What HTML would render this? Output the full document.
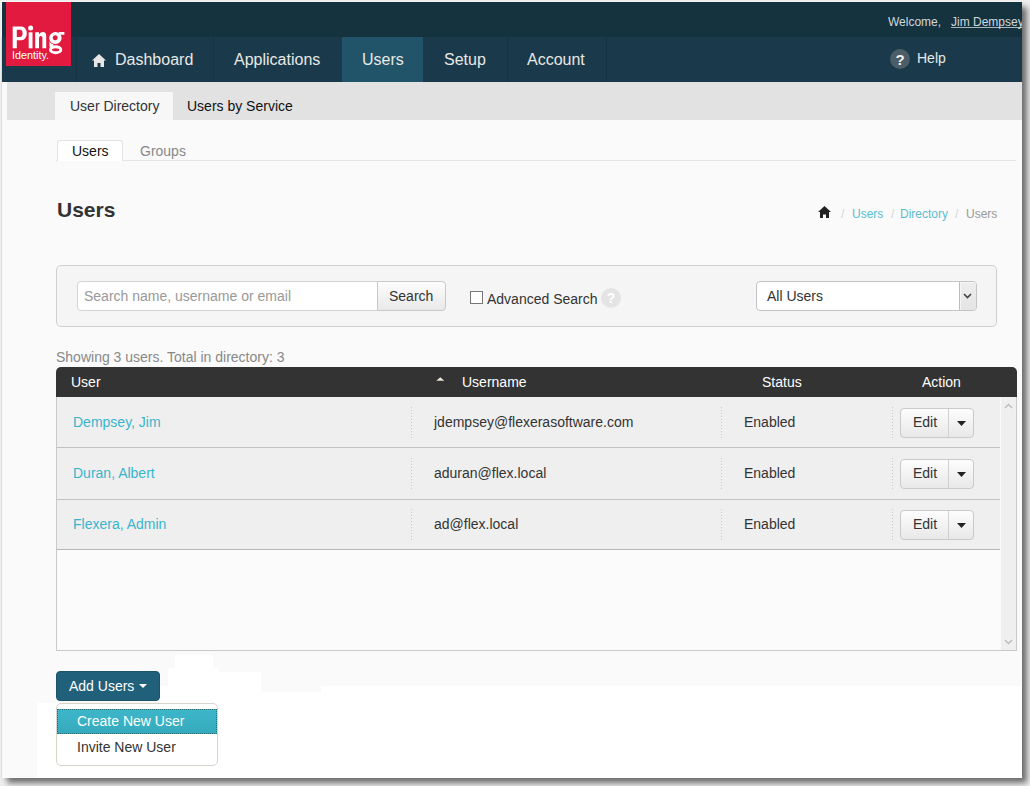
<!DOCTYPE html>
<html><head><meta charset="utf-8">
<style>
*{box-sizing:border-box;margin:0;padding:0}
html,body{width:1030px;height:786px;overflow:hidden;background:#efefef;font-family:"Liberation Sans",sans-serif;font-size:14px;color:#333}
.abs{position:absolute}
#frame{position:absolute;left:2px;top:2px;width:1020px;height:776px;background:#fafafa;box-shadow:5px 5px 6px rgba(0,0,0,.55),-1px -1px 0 #f8f8f8;overflow:hidden}
#topbar{left:0;top:0;width:1020px;height:35px;background:#15323f}
#nav{left:0;top:35px;width:1020px;height:45px;background:#1a3a4b}
#logo{left:4px;top:0;width:65px;height:64px;background:#e31a40}
.navitem{position:absolute;top:0;height:45px;color:#e8e8e6;font-size:16px;line-height:45px}
.sep{position:absolute;top:0;width:1px;height:45px;background:#163342}
#subnav{left:5px;top:80px;width:1015px;height:38px;background:#e2e2e2}
.t{position:absolute;white-space:nowrap;line-height:1}
</style></head><body>
<div style="position:absolute;z-index:5;left:1px;top:37px;width:1px;height:741px;background:#dedede"></div>
<div id="frame">
  <div id="topbar" class="abs">
    <div class="t" style="left:886px;top:14px;font-size:12px;color:#d0d8dc">Welcome,</div>
    <div class="t" style="left:949px;top:14px;font-size:12px;color:#d0d8dc;text-decoration:underline;text-decoration-skip-ink:none;text-decoration-color:#aab6bc">Jim Dempsey</div>
  </div>
  <div id="nav" class="abs">
    <div class="sep" style="left:74px"></div>
    <div class="sep" style="left:211px"></div>
    <div class="navitem" style="left:340px;width:81px;background:#225469"></div>
    <div class="sep" style="left:505px"></div>
    <div class="sep" style="left:604px"></div>
    <svg class="abs" style="left:90px;top:17px" width="14" height="13" viewBox="0 0 14 13"><path d="M7 0 L14 6.5 L12 6.5 L12 13 L8.5 13 L8.5 9 L5.5 9 L5.5 13 L2 13 L2 6.5 L0 6.5 Z" fill="#e6e6e6"/></svg>
    <div class="t" style="left:113px;top:15px;font-size:16px;color:#e8e8e6">Dashboard</div>
    <div class="t" style="left:232px;top:15px;font-size:16px;color:#e8e8e6">Applications</div>
    <div class="t" style="left:360px;top:15px;font-size:16px;color:#e8e8e6">Users</div>
    <div class="t" style="left:442px;top:15px;font-size:16px;color:#e8e8e6">Setup</div>
    <div class="t" style="left:525px;top:15px;font-size:16px;color:#e8e8e6">Account</div>
    <div class="abs" style="left:888px;top:12px;width:20px;height:20px;border-radius:50%;background:#4b5d67;color:#f2f2f2;font-size:15px;font-weight:bold;text-align:center;line-height:21px">?</div>
    <div class="t" style="left:915px;top:14px;font-size:14px;color:#e8e8e6">Help</div>
  </div>
  <div id="logo" class="abs"></div>
  <svg class="abs" style="left:-2px;top:-2px" width="80" height="70" viewBox="0 0 80 70">
    <g fill="#fff">
      <path fill-rule="evenodd" d="M12.7,26.6 H21.5 A5.3,6.85 0 0 1 21.5,40.3 H16.8 V48.3 H12.7 Z M16.8,29.7 H20 A2.6,3.6 0 0 1 20,36.9 H16.8 Z"/>
      <rect x="28.7" y="32.3" width="3.8" height="16"/>
      <circle cx="30.6" cy="27.9" r="2.5"/>
      <path d="M35.2,32.3 H39 V34.2 Q40.6,32.1 43,32.1 Q46.2,32.1 46.2,36.2 V48.3 H42.4 V37.6 Q42.4,35.9 40.8,35.9 Q39,35.9 39,38.2 V48.3 H35.2 Z"/>
      <path fill-rule="evenodd" d="M55.4,32.1 A6.2,6 0 1 1 55.39,32.1 Z M55.2,35.2 A2.5,2.5 0 1 0 55.21,35.2 Z"/>
      <path d="M58.5,32.1 H64.4 V34.8 H59.5 Z"/>
      <path d="M49.4,41 Q50.5,44 53.5,44.2 L53.2,46.2 L49.6,47.6 Z"/>
      <ellipse cx="55.65" cy="49.7" rx="5.1" ry="3" fill="none" stroke="#fff" stroke-width="3"/>
    </g>
    <text x="12" y="58.6" font-family="Liberation Sans" font-size="11.5" fill="#fff" textLength="37" lengthAdjust="spacingAndGlyphs">Identity.</text>
  </svg>
  <div id="subnav" class="abs">
    <div class="abs" style="left:48px;top:10px;width:118px;height:28px;background:#f7f7f7"></div>
    <div class="t" style="left:63px;top:17px;color:#333">User Directory</div>
    <div class="t" style="left:180px;top:17px;color:#111">Users by Service</div>
  </div>
  <!-- tabs -->
  <div class="abs" style="left:54px;top:158px;width:960px;height:1px;background:#e4e4e4"></div>
  <div class="abs" style="left:55px;top:138px;width:66px;height:21px;background:#fff;border:1px solid #e3e3e3;border-bottom:none;border-radius:3px 3px 0 0"></div>
  <div class="t" style="left:70px;top:142px;color:#111">Users</div>
  <div class="t" style="left:138px;top:142px;color:#888">Groups</div>
  <!-- title -->
  <div class="t" style="left:55px;top:197px;font-size:21px;font-weight:bold;color:#333">Users</div>
  <svg class="abs" style="left:816px;top:204px" width="13" height="12" viewBox="0 0 13 12"><path d="M6.5 0 L13 6 L11 6 L11 12 L8 12 L8 8.5 L5 8.5 L5 12 L2 12 L2 6 L0 6 Z" fill="#222"/></svg>
  <div class="t" style="left:839px;top:206px;font-size:12px;color:#d6d6d6">/</div>
  <div class="t" style="left:850px;top:206px;font-size:12px;color:#5bbdd2">Users</div>
  <div class="t" style="left:889px;top:206px;font-size:12px;color:#d6d6d6">/</div>
  <div class="t" style="left:898px;top:206px;font-size:12px;color:#5bbdd2">Directory</div>
  <div class="t" style="left:953px;top:206px;font-size:12px;color:#d6d6d6">/</div>
  <div class="t" style="left:964px;top:206px;font-size:12px;color:#999">Users</div>

  <!-- search panel -->
  <div class="abs" style="left:54px;top:263px;width:941px;height:62px;background:#f5f5f5;border:1px solid #cfcfcf;border-radius:5px"></div>
  <div class="abs" style="left:75px;top:279px;width:301px;height:30px;background:#fff;border:1px solid #d3d3d3;border-radius:4px 0 0 4px"></div>
  <div class="t" style="left:82px;top:287px;color:#999">Search name, username or email</div>
  <div class="abs" style="left:375px;top:279px;width:69px;height:30px;background:linear-gradient(#fdfdfd,#e9e9e9);border:1px solid #c8c8c8;border-radius:0 4px 4px 0"></div>
  <div class="t" style="left:387px;top:287px;color:#333">Search</div>
  <div class="abs" style="left:468px;top:289px;width:13px;height:13px;background:#fff;border:1px solid #777"></div>
  <div class="t" style="left:485px;top:290px;color:#333">Advanced Search</div>
  <div class="abs" style="left:599px;top:286px;width:20px;height:20px;border-radius:50%;background:#e4e4e4;color:#fff;font-size:14px;font-weight:bold;text-align:center;line-height:20px">?</div>
  <div class="abs" style="left:754px;top:279px;width:221px;height:30px;background:#fff;border:1px solid #c4c4c4;border-radius:4px"></div>
  <div class="abs" style="left:957px;top:280px;width:17px;height:28px;background:linear-gradient(#eeeeee,#e4e4e4);border-left:1px solid #bdbdbd;border-radius:0 3px 3px 0;box-shadow:inset 1px 1px 0 #f6f6f6"></div>
  <svg class="abs" style="left:961px;top:290.5px" width="9" height="6" viewBox="0 0 9 6"><path d="M1 1 L4.5 4.5 L8 1" stroke="#444" stroke-width="1.6" fill="none"/></svg>
  <div class="t" style="left:765px;top:287px;color:#333">All Users</div>
  <!-- showing -->
  <div class="t" style="left:54px;top:348px;color:#888">Showing 3 users. Total in directory: 3</div>
  <!-- table -->
  <div class="abs" style="left:54px;top:365px;width:961px;height:30px;background:#333;border-radius:5px 5px 0 0"></div>
  <div class="t" style="left:69px;top:373px;color:#fff">User</div>
  <svg class="abs" style="left:434px;top:375px" width="10" height="6" viewBox="0 0 10 6"><path d="M0.3 3.8 L4.3 0.3 L8.3 3.8 Z" fill="#eee9d8"/></svg>
  <div class="t" style="left:460px;top:373px;color:#fff">Username</div>
  <div class="t" style="left:760px;top:373px;color:#fff">Status</div>
  <div class="t" style="left:920px;top:373px;color:#fff">Action</div>
  <div class="abs" style="left:54px;top:395px;width:961px;height:254px;background:#fbfbfb;border:1px solid #c9c9c9;border-top:none"></div>
  <div class="abs" style="left:55px;top:395px;width:943px;height:50px;background:#efefef"></div>
  <div class="abs" style="left:55px;top:445px;width:943px;height:1px;background:#c2c2c2"></div>
  <div class="abs" style="left:55px;top:446px;width:943px;height:51px;background:#efefef"></div>
  <div class="abs" style="left:55px;top:497px;width:943px;height:1px;background:#c2c2c2"></div>
  <div class="abs" style="left:55px;top:498px;width:943px;height:49px;background:#efefef"></div>
  <div class="abs" style="left:55px;top:547px;width:943px;height:1px;background:#b8b8b8"></div>
  <div class="abs" style="left:998px;top:395px;width:16px;height:253px;background:#efefef;border-left:1px solid #fafafa"></div>
  <svg class="abs" style="left:1002px;top:401px" width="9" height="6" viewBox="0 0 9 6"><path d="M1 5 L4.5 1.5 L8 5" stroke="#bbb" stroke-width="1.4" fill="none"/></svg>
  <svg class="abs" style="left:1002px;top:637px" width="9" height="6" viewBox="0 0 9 6"><path d="M1 1 L4.5 4.5 L8 1" stroke="#bbb" stroke-width="1.4" fill="none"/></svg>
  <div class="t" style="left:71px;top:413px;color:#3ab4cc">Dempsey, Jim</div>
  <div class="abs" style="left:409px;top:405px;width:1px;height:32px;background:repeating-linear-gradient(#c8c8c8 0 1px,transparent 1px 3px)"></div>
  <div class="t" style="left:432px;top:413px;color:#333">jdempsey@flexerasoftware.com</div>
  <div class="abs" style="left:719px;top:405px;width:1px;height:32px;background:repeating-linear-gradient(#c8c8c8 0 1px,transparent 1px 3px)"></div>
  <div class="t" style="left:742px;top:413px;color:#333">Enabled</div>
  <div class="abs" style="left:890px;top:405px;width:1px;height:32px;background:repeating-linear-gradient(#c8c8c8 0 1px,transparent 1px 3px)"></div>
  <div class="abs" style="left:898px;top:406px;width:74px;height:30px;background:linear-gradient(#fdfdfd,#e8e8e8);border:1px solid #cacaca;border-radius:4px"></div>
  <div class="abs" style="left:946px;top:407px;width:1px;height:28px;background:#d0d0d0"></div>
  <svg class="abs" style="left:955px;top:419px" width="9" height="5" viewBox="0 0 9 5"><path d="M0 0 L9 0 L4.5 5 Z" fill="#222"/></svg>
  <div class="t" style="left:911px;top:413px;color:#333">Edit</div>
  <div class="t" style="left:71px;top:464px;color:#3ab4cc">Duran, Albert</div>
  <div class="abs" style="left:409px;top:456px;width:1px;height:32px;background:repeating-linear-gradient(#c8c8c8 0 1px,transparent 1px 3px)"></div>
  <div class="t" style="left:432px;top:464px;color:#333">aduran@flex.local</div>
  <div class="abs" style="left:719px;top:456px;width:1px;height:32px;background:repeating-linear-gradient(#c8c8c8 0 1px,transparent 1px 3px)"></div>
  <div class="t" style="left:742px;top:464px;color:#333">Enabled</div>
  <div class="abs" style="left:890px;top:456px;width:1px;height:32px;background:repeating-linear-gradient(#c8c8c8 0 1px,transparent 1px 3px)"></div>
  <div class="abs" style="left:898px;top:457px;width:74px;height:30px;background:linear-gradient(#fdfdfd,#e8e8e8);border:1px solid #cacaca;border-radius:4px"></div>
  <div class="abs" style="left:946px;top:458px;width:1px;height:28px;background:#d0d0d0"></div>
  <svg class="abs" style="left:955px;top:470px" width="9" height="5" viewBox="0 0 9 5"><path d="M0 0 L9 0 L4.5 5 Z" fill="#222"/></svg>
  <div class="t" style="left:911px;top:464px;color:#333">Edit</div>
  <div class="t" style="left:71px;top:515px;color:#3ab4cc">Flexera, Admin</div>
  <div class="abs" style="left:409px;top:507px;width:1px;height:32px;background:repeating-linear-gradient(#c8c8c8 0 1px,transparent 1px 3px)"></div>
  <div class="t" style="left:432px;top:515px;color:#333">ad@flex.local</div>
  <div class="abs" style="left:719px;top:507px;width:1px;height:32px;background:repeating-linear-gradient(#c8c8c8 0 1px,transparent 1px 3px)"></div>
  <div class="t" style="left:742px;top:515px;color:#333">Enabled</div>
  <div class="abs" style="left:890px;top:507px;width:1px;height:32px;background:repeating-linear-gradient(#c8c8c8 0 1px,transparent 1px 3px)"></div>
  <div class="abs" style="left:898px;top:508px;width:74px;height:30px;background:linear-gradient(#fdfdfd,#e8e8e8);border:1px solid #cacaca;border-radius:4px"></div>
  <div class="abs" style="left:946px;top:509px;width:1px;height:28px;background:#d0d0d0"></div>
  <svg class="abs" style="left:955px;top:521px" width="9" height="5" viewBox="0 0 9 5"><path d="M0 0 L9 0 L4.5 5 Z" fill="#222"/></svg>
  <div class="t" style="left:911px;top:515px;color:#333">Edit</div>

  <!-- bottom white patch -->
  <div class="abs" style="left:215px;top:684px;width:805px;height:95px;background:#fff"></div>
  <div class="abs" style="left:259px;top:684px;width:60px;height:6px;background:#fafafa"></div>
  <div class="abs" style="left:166px;top:666px;width:51px;height:27px;background:#fff"></div>
  <div class="abs" style="left:173px;top:653px;width:38px;height:13px;background:#fff"></div>
  <div class="abs" style="left:211px;top:670px;width:48px;height:14px;background:#fff"></div>
  <div class="abs" style="left:157px;top:684px;width:60px;height:95px;background:#fff"></div>
  <div class="abs" style="left:35px;top:701px;width:128px;height:80px;background:#fff"></div>
  <div class="abs" style="left:54px;top:669px;width:104px;height:30px;background:#21607a;border:1px solid #1c526a;border-radius:4px"></div>
  <div class="t" style="left:67px;top:677px;color:#fff">Add Users</div>
  <svg class="abs" style="left:137px;top:682px" width="8" height="4" viewBox="0 0 8 4"><path d="M0 0 L8 0 L4 4 Z" fill="#fff"/></svg>
  <div class="abs" style="left:54px;top:701px;width:162px;height:63px;background:#fff;border:1px solid #d8d4cc;border-radius:5px"></div>
  <div class="abs" style="left:55px;top:707px;width:160px;height:25px;background:linear-gradient(#3eb6c9,#35aabd);outline:1px dotted #20707e;outline-offset:-1px"></div>
  <div class="t" style="left:75px;top:712px;color:#fff">Create New User</div>
  <div class="t" style="left:75px;top:738px;color:#333">Invite New User</div>
</div>
</body></html>
